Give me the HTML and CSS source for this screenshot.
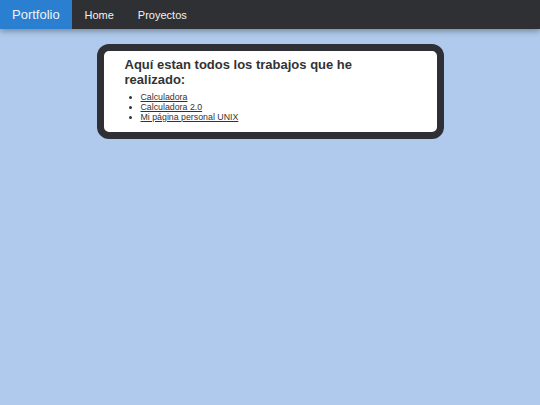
FILE: index.html
```html
<!DOCTYPE html>
<html lang="es">
<head>
<meta charset="utf-8">
<title>Portfolio</title>
<link rel="stylesheet" href="styles.css">
</head>
<body>
<nav class="topnav">
  <a class="brand" href="#">Portfolio</a>
  <a class="link" href="#">Home</a>
  <a class="link" href="#">Proyectos</a>
</nav>
<main class="card">
  <h2 class="title">Aquí estan todos los trabajos que he realizado:</h2>
  <ul class="list">
    <li><a href="#">Calculadora</a></li>
    <li><a href="#">Calculadora 2.0</a></li>
    <li><a href="#">Mi página personal UNIX</a></li>
  </ul>
</main>
</body>
</html>
```
FILE: styles.css
```css
html, body {
  margin: 0;
  padding: 0;
}
body {
  background: #afcaec;
  font-family: "Liberation Sans", Arial, sans-serif;
  color: #333;
  min-height: 405px;
}
.topnav {
  display: flex;
  align-items: stretch;
  height: 29px;
  background: #2f3034;
  box-shadow: 0 2px 6px rgba(0, 0, 0, 0.35);
  position: relative;
}
.topnav a {
  display: flex;
  align-items: center;
  text-decoration: none;
  color: #f2f2f2;
}
.brand {
  background: #2a7fd0;
  font-size: 13px;
  padding: 0 12px 0 12px;
  width: 48px;
}
.link {
  font-size: 11px;
  padding: 0 12.5px;
}
.link + .link {
  margin-left: -1px;
}
.card {
  margin: 15px auto 0;
  background: #fff;
  border: 7px solid #2f3035;
  border-radius: 12px;
  padding: 6px 24px 6px 21px;
  box-sizing: content-box;
  width: 288px;
}
.title {
  margin: 0 0 5px;
  font-size: 13px;
  line-height: 15px;
  font-weight: bold;
  color: #333;
}
.list {
  margin: 0 0 4px;
  padding-left: 16px;
  font-size: 8.8px;
  line-height: 10px;
}
.list a {
  color: #333;
  text-decoration: underline;
}
```
